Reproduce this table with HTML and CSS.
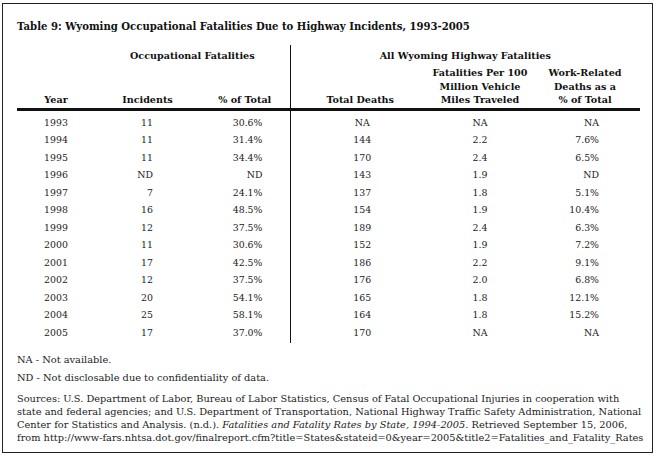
FILE: index.html
```html
<!DOCTYPE html>
<html>
<head>
<meta charset="utf-8">
<link rel="stylesheet" href="styles.css">
</head>
<body>
<div class="frame">
  <h1 class="title">Table 9: Wyoming Occupational Fatalities Due to Highway Incidents, 1993-2005</h1>
  <table class="data">
    <colgroup>
      <col class="c1"><col class="c2"><col class="c3"><col class="c4"><col class="c5"><col class="c6">
    </colgroup>
    <thead>
      <tr class="grp">
        <th></th>
        <th colspan="2">Occupational Fatalities</th>
        <th colspan="3" class="div">All Wyoming Highway Fatalities</th>
      </tr>
      <tr class="hdr">
        <th>Year</th>
        <th>Incidents</th>
        <th>% of Total</th>
        <th class="div">Total Deaths</th>
        <th>Fatalities Per 100<br>Million Vehicle<br>Miles Traveled</th>
        <th>Work-Related<br>Deaths as a<br>% of Total</th>
      </tr>
    </thead>
    <tbody>
      <tr><td>1993</td><td class="inc">11</td><td class="pct">30.6%</td><td class="div tot">NA</td><td class="rate">NA</td><td class="wr">NA</td></tr>
      <tr><td>1994</td><td class="inc">11</td><td class="pct">31.4%</td><td class="div tot">144</td><td class="rate">2.2</td><td class="wr">7.6%</td></tr>
      <tr><td>1995</td><td class="inc">11</td><td class="pct">34.4%</td><td class="div tot">170</td><td class="rate">2.4</td><td class="wr">6.5%</td></tr>
      <tr><td>1996</td><td class="inc">ND</td><td class="pct">ND</td><td class="div tot">143</td><td class="rate">1.9</td><td class="wr">ND</td></tr>
      <tr><td>1997</td><td class="inc">7</td><td class="pct">24.1%</td><td class="div tot">137</td><td class="rate">1.8</td><td class="wr">5.1%</td></tr>
      <tr><td>1998</td><td class="inc">16</td><td class="pct">48.5%</td><td class="div tot">154</td><td class="rate">1.9</td><td class="wr">10.4%</td></tr>
      <tr><td>1999</td><td class="inc">12</td><td class="pct">37.5%</td><td class="div tot">189</td><td class="rate">2.4</td><td class="wr">6.3%</td></tr>
      <tr><td>2000</td><td class="inc">11</td><td class="pct">30.6%</td><td class="div tot">152</td><td class="rate">1.9</td><td class="wr">7.2%</td></tr>
      <tr><td>2001</td><td class="inc">17</td><td class="pct">42.5%</td><td class="div tot">186</td><td class="rate">2.2</td><td class="wr">9.1%</td></tr>
      <tr><td>2002</td><td class="inc">12</td><td class="pct">37.5%</td><td class="div tot">176</td><td class="rate">2.0</td><td class="wr">6.8%</td></tr>
      <tr><td>2003</td><td class="inc">20</td><td class="pct">54.1%</td><td class="div tot">165</td><td class="rate">1.8</td><td class="wr">12.1%</td></tr>
      <tr><td>2004</td><td class="inc">25</td><td class="pct">58.1%</td><td class="div tot">164</td><td class="rate">1.8</td><td class="wr">15.2%</td></tr>
      <tr><td>2005</td><td class="inc">17</td><td class="pct">37.0%</td><td class="div tot">170</td><td class="rate">NA</td><td class="wr">NA</td></tr>
    </tbody>
  </table>
  <p class="note first">NA - Not available.</p>
  <p class="note">ND - Not disclosable due to confidentiality of data.</p>
  <p class="sources">Sources: U.S. Department of Labor, Bureau of Labor Statistics, Census of Fatal Occupational Injuries in cooperation with<br>state and federal agencies; and U.S. Department of Transportation, National Highway Traffic Safety Administration, National<br>Center for Statistics and Analysis. (n.d.). <em>Fatalities and Fatality Rates by State, 1994-2005.</em> Retrieved September 15, 2006,<br>from http://www-fars.nhtsa.dot.gov/finalreport.cfm?title=States&amp;stateid=0&amp;year=2005&amp;title2=Fatalities_and_Fatality_Rates</p>
</div>
</body>
</html>
```

FILE: styles.css
```css
html, body {
  margin: 0;
  padding: 0;
  background: #ffffff;
}

body {
  font-family: "DejaVu Serif", "Liberation Serif", serif;
  font-size: 9.8px;
  color: #222;
}

.frame {
  box-sizing: border-box;
  margin: 3px 0 0 2px;
  width: 651px;
  height: 450px;
  border: 1px solid #222;
  padding: 17px 0 0 14px;
  box-shadow: 0 4px 0 #ececec;
}

.title {
  margin: 0;
  font-size: 10.1px;
  font-weight: bold;
  line-height: 12px;
  color: #111;
  white-space: nowrap;
}

.data {
  margin-top: 12px;
  border-collapse: collapse;
  table-layout: fixed;
  width: 623px;
  font-size: 9.6px;
}

.c1 { width: 78px; }
.c2 { width: 105px; }
.c3 { width: 90px; }
.c4 { width: 140px; }
.c5 { width: 100px; }
.c6 { width: 110px; }

.data th {
  font-weight: bold;
  color: #111;
  padding: 0;
  white-space: nowrap;
}

.grp th {
  height: 17px;
  line-height: 13px;
  vertical-align: top;
  padding-top: 4px;
}

.hdr th {
  vertical-align: bottom;
  line-height: 13.5px;
  padding-bottom: 1px;
  border-bottom: 3px solid #111;
}

.data .div {
  border-left: 1px solid #111;
}

.data td {
  padding: 0;
  line-height: 17.5px;
  text-align: center;
  white-space: nowrap;
  font-size: 9.4px;
}

.data tbody tr:first-child td {
  padding-top: 3px;
}

.data tbody tr:last-child td {
  padding-bottom: 2px;
}

.data td.inc {
  text-align: right;
  padding-right: 47px;
}

.data td.pct {
  text-align: right;
  padding-right: 27px;
}

.data td.tot {
  text-align: center;
  padding-left: 4px;
}

.data td.rate {
  text-align: center;
}

.data td.wr {
  text-align: right;
  padding-right: 41px;
}

.note {
  margin: 5px 0 0;
  line-height: 13px;
}

.note.first {
  margin-top: 10px;
}

.sources {
  margin: 8px 0 0;
  line-height: 13px;
  white-space: nowrap;
}

.sources em {
  font-style: italic;
}
```
